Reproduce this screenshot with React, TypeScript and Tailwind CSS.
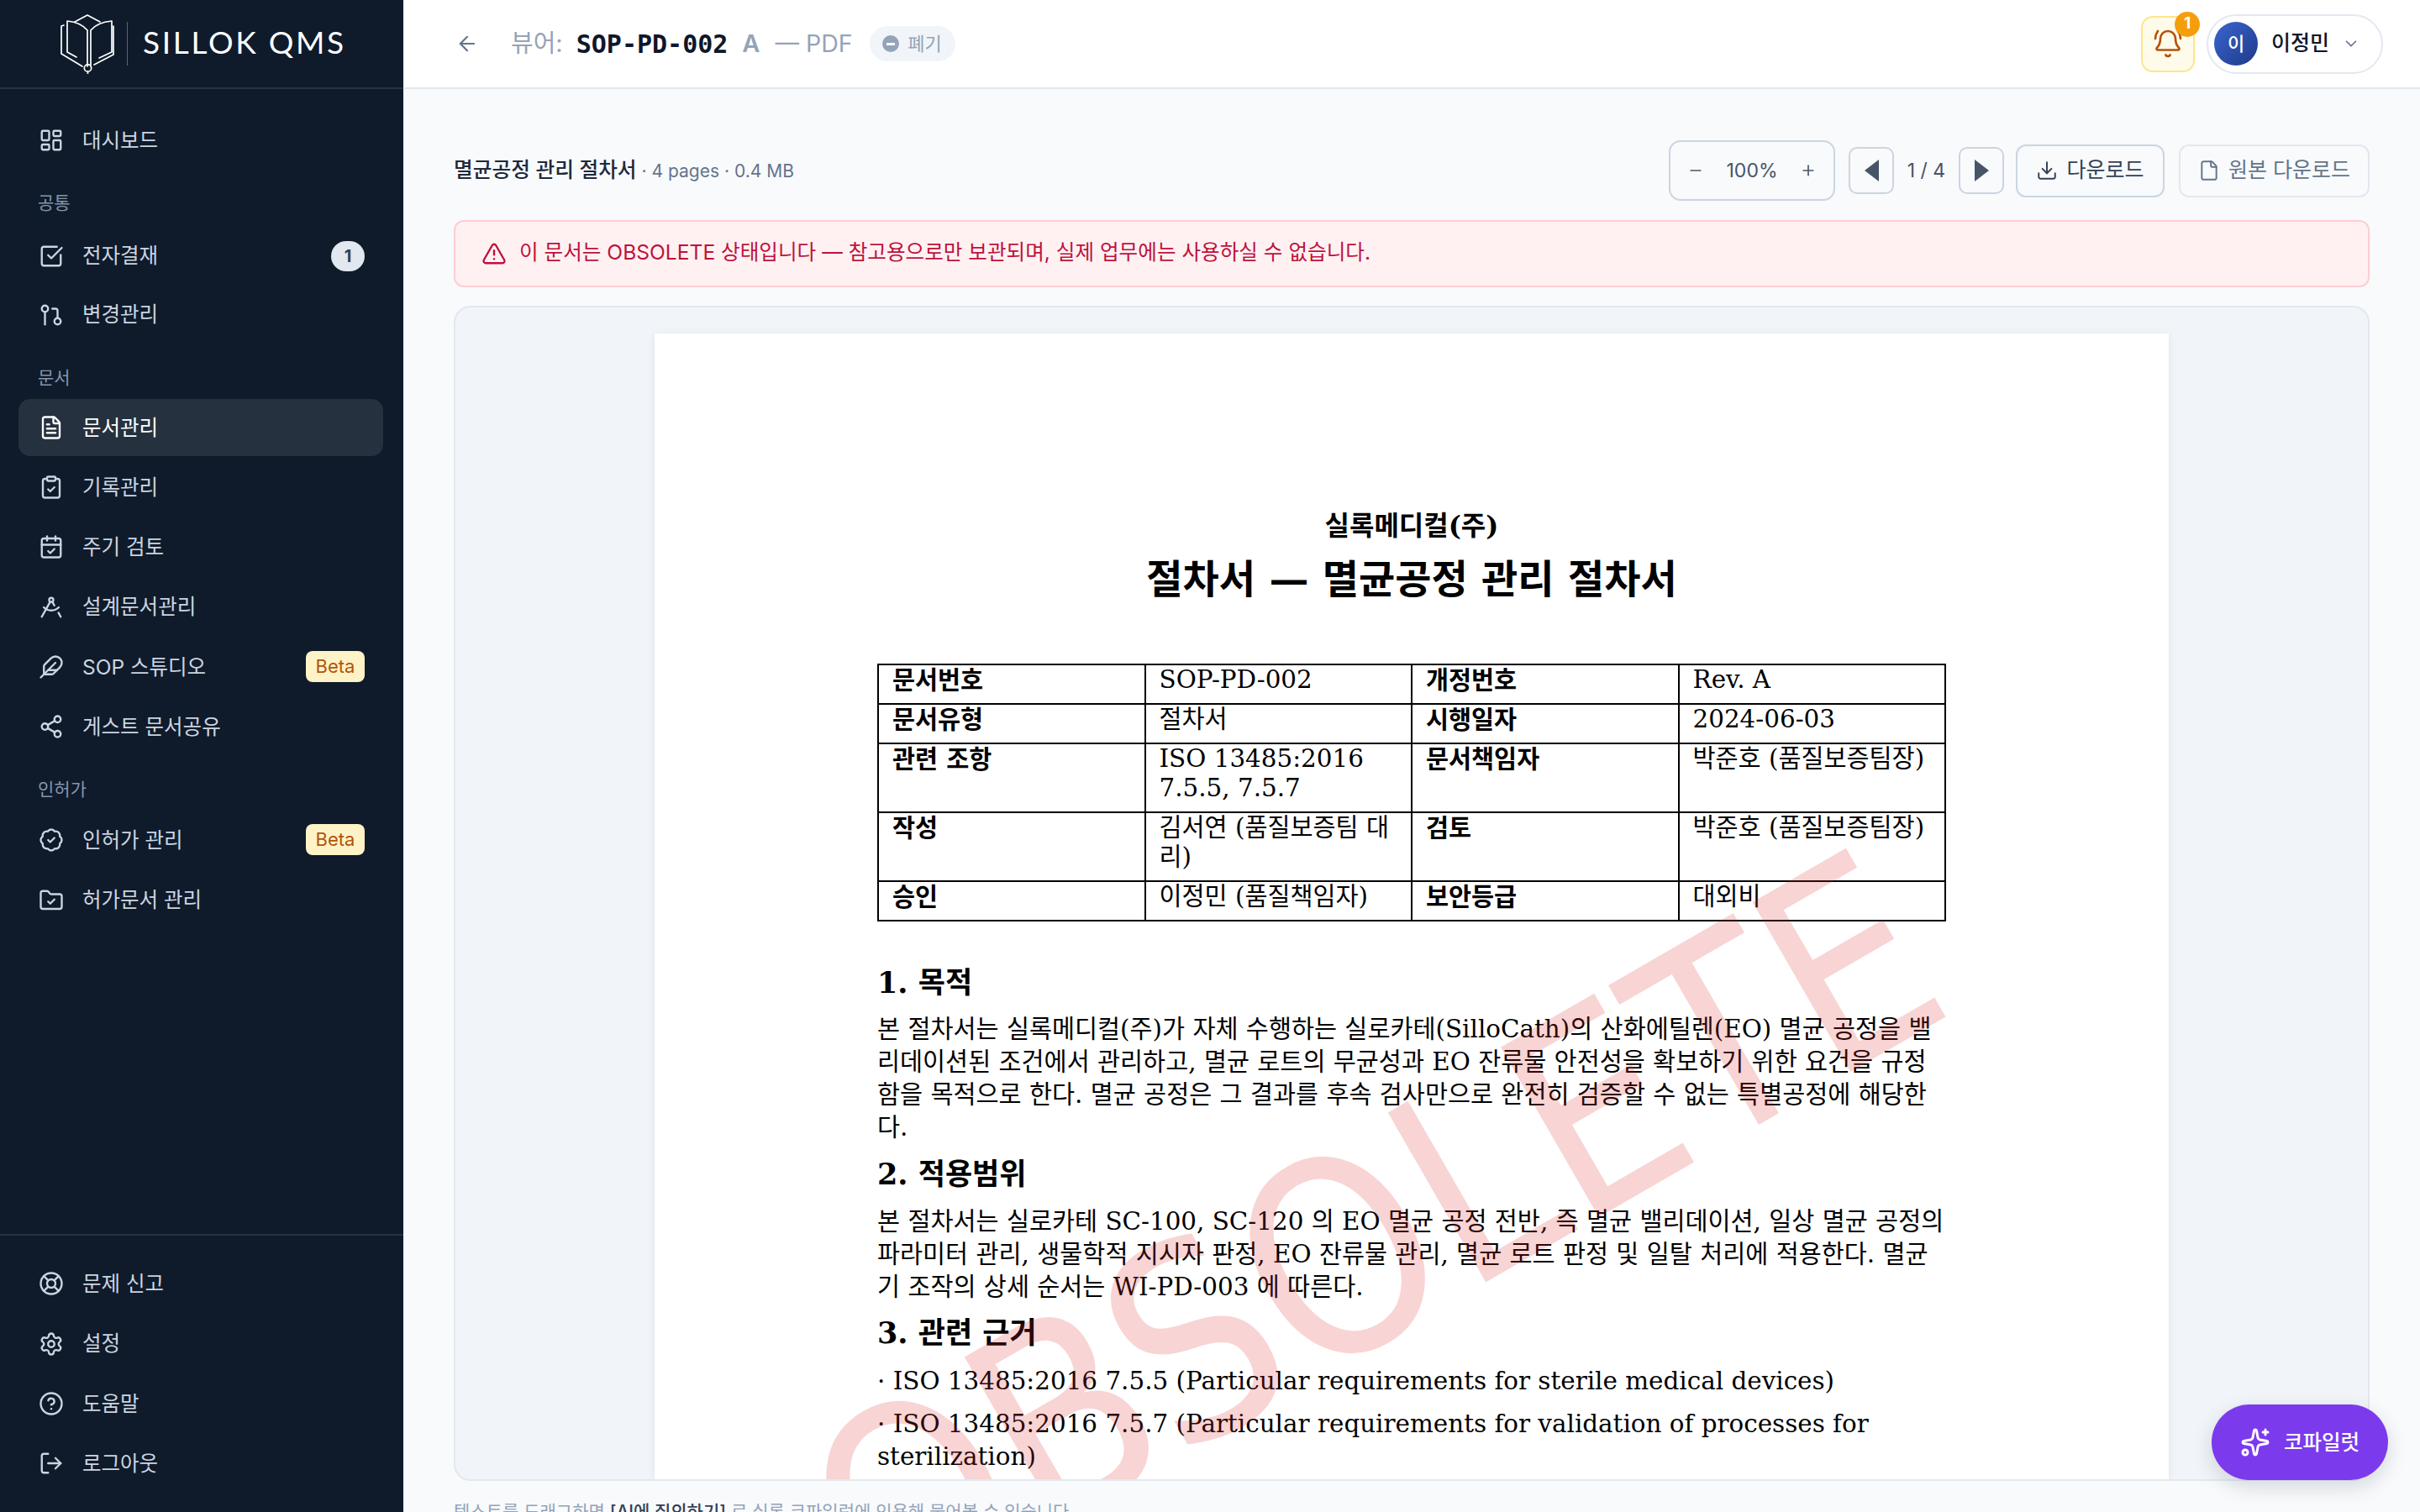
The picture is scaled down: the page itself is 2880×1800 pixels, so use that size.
import React from "react";
import {
  ArrowLeft,
  BadgeCheck,
  BellRing,
  CalendarCheck,
  ChevronDown,
  CircleHelp,
  ClipboardCheck,
  Download,
  DraftingCompass,
  Feather,
  File,
  FileText,
  FolderCheck,
  GitPullRequest,
  LayoutDashboard,
  LifeBuoy,
  LogOut,
  Minus,
  Plus,
  Settings,
  Share2,
  Sparkles,
  SquareCheckBig,
  TriangleAlert,
} from "lucide-react";

const UI_FONT = "font-['Inter','Noto_Sans_CJK_KR',sans-serif]";
const DOC_FONT = "font-['DejaVu_Serif','Noto_Sans_CJK_KR',serif]";

type NavEntry = {
  label: string;
  icon: React.ComponentType<{ className?: string; strokeWidth?: number }>;
  active?: boolean;
  count?: string;
  beta?: boolean;
};

const NavItem = ({ item }: { item: NavEntry }) => {
  const Icon = item.icon;
  return (
    <div
      className={`flex h-[68px] items-center rounded-[14px] pl-[24px] pr-[22px] ${
        item.active ? "bg-[#25313f] text-white" : "text-[#cbd5e1]"
      }`}
    >
      <Icon className="h-[30px] w-[30px] shrink-0" strokeWidth={1.9} />
      <span className="ml-[22px] flex-1 text-[24.5px] leading-none">{item.label}</span>
      {item.count && (
        <span className="flex h-[36px] w-[40px] items-center justify-center rounded-full bg-[#e2e8f0] text-[20px] font-bold text-[#334155]">
          {item.count}
        </span>
      )}
      {item.beta && (
        <span className="flex h-[37px] w-[70px] items-center justify-center rounded-[8px] bg-[#fef3c7] text-[22px] text-[#b45309]">
          Beta
        </span>
      )}
    </div>
  );
};

const NavLabel = ({ text }: { text: string }) => (
  <div className="flex h-[40px] items-center pl-[23px] text-[21px] leading-none text-[#8595ab]">{text}</div>
);

const Logo = () => (
  <div className="flex h-[104px] items-center pl-[72px]">
    <svg width="64" height="72" viewBox="0 0 64 72" fill="none" stroke="#ffffff" strokeWidth="1.7" strokeLinejoin="round" strokeLinecap="round">
      <path d="M17 10 L32 2 L47 10" />
      <path d="M32 63 L32 20 C27 14 18 10 8 9 L8 46 L19 52" />
      <path d="M36 63 L36 20 C41 14 50 10 61 9 L61 46 L46 53" />
      <path d="M4 14 L1 15 L1 48 L26 63" />
      <path d="M63 15 L63 49 L40 61" />
      <circle cx="32.5" cy="65" r="4.2" />
      <path d="M32.5 69 L32.5 72" />
    </svg>
    <div className="ml-[15px] h-[52px] w-[1px] bg-[#5b6675]" />
    <span className="mb-[6px] ml-[18px] font-['Lato',sans-serif] text-[37px] leading-none tracking-[2.7px] text-white">SILLOK QMS</span>
  </div>
);

const Sidebar = () => (
  <aside className="flex h-full w-[480px] shrink-0 flex-col bg-[#0f1b2b]">
    <div className="h-[106px] border-b-2 border-[#263241]">
      <Logo />
    </div>
    <nav className="flex-1 pl-[22px] pr-[24px] pt-[27px]">
      <NavItem item={{ label: "대시보드", icon: LayoutDashboard }} />
      <div className="mt-[20px]">
        <NavLabel text="공통" />
      </div>
      <div className="mt-[9.5px] flex flex-col gap-[2px]">
        <NavItem item={{ label: "전자결재", icon: SquareCheckBig, count: "1" }} />
        <NavItem item={{ label: "변경관리", icon: GitPullRequest }} />
      </div>
      <div className="mt-[20.5px]">
        <NavLabel text="문서" />
      </div>
      <div className="mt-[6px] flex flex-col gap-[3.2px]">
        <NavItem item={{ label: "문서관리", icon: FileText, active: true }} />
        <NavItem item={{ label: "기록관리", icon: ClipboardCheck }} />
        <NavItem item={{ label: "주기 검토", icon: CalendarCheck }} />
        <NavItem item={{ label: "설계문서관리", icon: DraftingCompass }} />
        <NavItem item={{ label: "SOP 스튜디오", icon: Feather, beta: true }} />
        <NavItem item={{ label: "게스트 문서공유", icon: Share2 }} />
      </div>
      <div className="mt-[21px]">
        <NavLabel text="인허가" />
      </div>
      <div className="mt-[6px] flex flex-col gap-[3.6px]">
        <NavItem item={{ label: "인허가 관리", icon: BadgeCheck, beta: true }} />
        <NavItem item={{ label: "허가문서 관리", icon: FolderCheck }} />
      </div>
    </nav>
    <div className="flex flex-col gap-[3.2px] border-t-2 border-[#263241] pb-[24px] pl-[22px] pr-[24px] pt-[23px]">
      <NavItem item={{ label: "문제 신고", icon: LifeBuoy }} />
      <NavItem item={{ label: "설정", icon: Settings }} />
      <NavItem item={{ label: "도움말", icon: CircleHelp }} />
      <NavItem item={{ label: "로그아웃", icon: LogOut }} />
    </div>
  </aside>
);

const TopBar = () => (
  <header className="flex h-[106px] shrink-0 items-center border-b-2 border-[#e2e8f0] bg-white pl-[62px] pr-[44px]">
    <ArrowLeft className="h-[28px] w-[28px] text-[#64748b]" strokeWidth={1.9} />
    <span className="ml-[38px] text-[29px] text-[#94a3b8]">뷰어:</span>
    <span className="ml-[16px] font-['DejaVu_Sans_Mono',monospace] text-[30px] font-bold text-[#0f172a]">SOP-PD-002</span>
    <span className="ml-[17px] text-[29px] font-semibold text-[#94a3b8]">A</span>
    <span className="ml-[18px] text-[28.5px] text-[#94a3b8]">— PDF</span>
    <span className="ml-[20px] flex h-[42px] w-[102px] items-center justify-center gap-[10px] rounded-full bg-[#f1f5f9] text-[22px] text-[#94a3b8]">
      <span className="flex h-[20px] w-[20px] items-center justify-center rounded-full bg-[#94a3b8]">
        <span className="h-[3px] w-[10px] bg-white" />
      </span>
      폐기
    </span>
    <div className="ml-auto flex items-center gap-[14px]">
      <div className="relative flex h-[67px] w-[64px] items-center justify-center rounded-[14px] border-2 border-[#fde68a] bg-[#fffbeb]">
        <BellRing className="h-[36px] w-[36px] text-[#b45309]" strokeWidth={1.8} />
        <span className="absolute right-[-8px] top-[-7px] flex h-[30px] w-[30px] items-center justify-center rounded-full bg-[#f59e0b] text-[19px] font-bold text-white">
          1
        </span>
      </div>
      <div className="flex h-[71px] w-[210px] items-center rounded-full border-2 border-[#e2e8f0] pl-[7px]">
        <span className="flex h-[52px] w-[52px] items-center justify-center rounded-full bg-linear-to-br from-[#3b66cf] to-[#1e3a8a] text-[22px] font-medium text-white">
          이
        </span>
        <span className="ml-[16px] text-[25px] font-medium text-[#0f172a]">이정민</span>
        <ChevronDown className="ml-[15px] h-[22px] w-[22px] text-[#64748b]" strokeWidth={1.8} />
      </div>
    </div>
  </header>
);

const Toolbar = () => (
  <div className="flex h-[72px] shrink-0 items-center">
    <div className="text-[24.7px] font-medium text-[#1e293b]">
      멸균공정 관리 절차서
      <span className="ml-[6px] text-[21px] font-normal text-[#64748b]">· 4 pages · 0.4 MB</span>
    </div>
    <div className="ml-auto flex items-center">
      <div className="flex h-[72px] w-[198px] items-center justify-between rounded-[14px] border-2 border-[#cbd5e1] px-[20px] text-[#475569]">
        <Minus className="h-[20px] w-[20px]" strokeWidth={2} />
        <span className="text-[23px]">100%</span>
        <Plus className="h-[20px] w-[20px]" strokeWidth={2} />
      </div>
      <button className="ml-[16px] flex h-[56px] w-[54px] items-center justify-center rounded-[10px] border-2 border-[#cbd5e1] text-[#475569]">
        <span className="h-0 w-0 border-y-[13px] border-r-[17px] border-y-transparent border-r-[#475569]" />
      </button>
      <span className="w-[77px] text-center text-[23px] text-[#475569]">1 / 4</span>
      <button className="flex h-[56px] w-[54px] items-center justify-center rounded-[10px] border-2 border-[#cbd5e1]">
        <span className="h-0 w-0 border-y-[13px] border-l-[17px] border-y-transparent border-l-[#475569]" />
      </button>
      <button className="ml-[14px] flex h-[63px] w-[177px] items-center justify-center gap-[10px] rounded-[12px] border-2 border-[#cbd5e1] text-[25px] text-[#334155]">
        <Download className="h-[26px] w-[26px]" strokeWidth={1.8} />
        다운로드
      </button>
      <button className="ml-[17px] flex h-[63px] w-[227px] items-center justify-center gap-[10px] rounded-[12px] border-2 border-[#e2e8f0] text-[25px] text-[#64748b]">
        <File className="h-[26px] w-[26px]" strokeWidth={1.8} />
        원본 다운로드
      </button>
    </div>
  </div>
);

const Alert = () => (
  <div className="mt-[23px] flex h-[80px] shrink-0 items-center rounded-[12px] border-2 border-[#fecdd3] bg-[#fff1f2] pl-[31px] text-[24.6px] text-[#be123c]">
    <TriangleAlert className="h-[30px] w-[30px] shrink-0" strokeWidth={1.9} />
    <span className="mb-[4px] ml-[15px]">이 문서는 OBSOLETE 상태입니다 — 참고용으로만 보관되며, 실제 업무에는 사용하실 수 없습니다.</span>
  </div>
);

const metaRows: [string, string, string, string][] = [
  ["문서번호", "SOP-PD-002", "개정번호", "Rev. A"],
  ["문서유형", "절차서", "시행일자", "2024-06-03"],
  ["관련 조항", "ISO 13485:2016 7.5.5, 7.5.7", "문서책임자", "박준호 (품질보증팀장)"],
  ["작성", "김서연 (품질보증팀 대리)", "검토", "박준호 (품질보증팀장)"],
  ["승인", "이정민 (품질책임자)", "보안등급", "대외비"],
];

const DocPage = () => (
  <div className={`relative w-[1802px] shrink-0 bg-white px-[265px] pt-[209px] text-black shadow-[0_2px_10px_rgba(15,23,42,0.08)] ${DOC_FONT}`}>
    <div className="text-center text-[32px] font-bold leading-[40px]">실록메디컬(주)</div>
    <div className="mt-[16px] text-center text-[47px] font-bold leading-[56px]">절차서 — 멸균공정 관리 절차서</div>
    <table className="mt-[72px] w-[1272px] table-fixed border-collapse text-[29.4px] leading-[35px]">
      <tbody>
        {metaRows.map((row) => (
          <tr key={row[0]}>
            {row.map((cell, i) => (
              <td
                key={i}
                className={`border-2 border-black pb-[10px] pl-[16px] pr-[17px] pt-0 align-top ${i % 2 === 0 ? "font-bold" : ""}`}
              >
                {cell}
              </td>
            ))}
          </tr>
        ))}
      </tbody>
    </table>
    <h2 className="mt-[50px] text-[35px] font-bold leading-[46px]">1. 목적</h2>
    <p className="mt-[12.5px] text-[29.4px] leading-[39px]">
      본 절차서는 실록메디컬(주)가 자체 수행하는 실로카테(SilloCath)의 산화에틸렌(EO) 멸균 공정을 밸리데이션된 조건에서 관리하고, 멸균 로트의 무균성과 EO 잔류물 안전성을 확보하기 위한 요건을 규정함을 목적으로 한다. 멸균 공정은 그 결과를 후속 검사만으로 완전히 검증할 수 없는 특별공정에 해당한다.
    </p>
    <h2 className="mt-[13.5px] text-[35px] font-bold leading-[46px]">2. 적용범위</h2>
    <p className="mt-[13.5px] text-[29.4px] leading-[39px]">
      본 절차서는 실로카테 SC-100, SC-120 의 EO 멸균 공정 전반, 즉 멸균 밸리데이션, 일상 멸균 공정의 파라미터 관리, 생물학적 지시자 판정, EO 잔류물 관리, 멸균 로트 판정 및 일탈 처리에 적용한다. 멸균기 조작의 상세 순서는 WI-PD-003 에 따른다.
    </p>
    <h2 className="mt-[12.5px] text-[35px] font-bold leading-[46px]">3. 관련 근거</h2>
    <p className="mt-[15px] text-[29.4px] leading-[39px]">· ISO 13485:2016 7.5.5 (Particular requirements for sterile medical devices)</p>
    <p className="mt-[12px] text-[29.4px] leading-[39px]">· ISO 13485:2016 7.5.7 (Particular requirements for validation of processes for sterilization)</p>
    <div className="h-[600px]" />
    <div className="absolute left-[7px] top-[918px] rotate-[-30deg] scale-x-[0.87] whitespace-nowrap font-['DejaVu_Sans',sans-serif] text-[320px] leading-none text-[#dc2626]/20">
      OBSOLETE
    </div>
  </div>
);

const App = () => (
  <div className={`flex h-[1800px] w-[2880px] overflow-hidden bg-[#f8fafc] ${UI_FONT}`}>
    <Sidebar />
    <main className="relative flex min-w-0 flex-1 flex-col">
      <TopBar />
      <div className="flex min-h-0 flex-1 flex-col px-[60px] pt-[61px]">
        <Toolbar />
        <Alert />
        <div className="mt-[22px] flex h-[1399px] shrink-0 justify-center overflow-hidden rounded-[20px] border-2 border-[#e2e8f0] bg-[#f1f5f9] pt-[31px]">
          <DocPage />
        </div>
        <div className="mt-[22px] shrink-0 whitespace-nowrap text-[21px] leading-[30px] text-[#94a3b8]">
          텍스트를 드래그하면 <span className="font-medium text-[#334155]">[AI에 질의하기]</span> 로 실록 코파일럿에 인용해 물어볼 수 있습니다.
        </div>
      </div>
      <button className="absolute bottom-[38px] right-[38px] flex h-[90px] w-[210px] items-center justify-center gap-[16px] rounded-full bg-[#7c3aed] text-[24.5px] font-medium text-white shadow-[0_8px_24px_rgba(15,23,42,0.15)]">
        <Sparkles className="h-[36px] w-[36px]" strokeWidth={2} />
        코파일럿
      </button>
    </main>
  </div>
);

export default App;
